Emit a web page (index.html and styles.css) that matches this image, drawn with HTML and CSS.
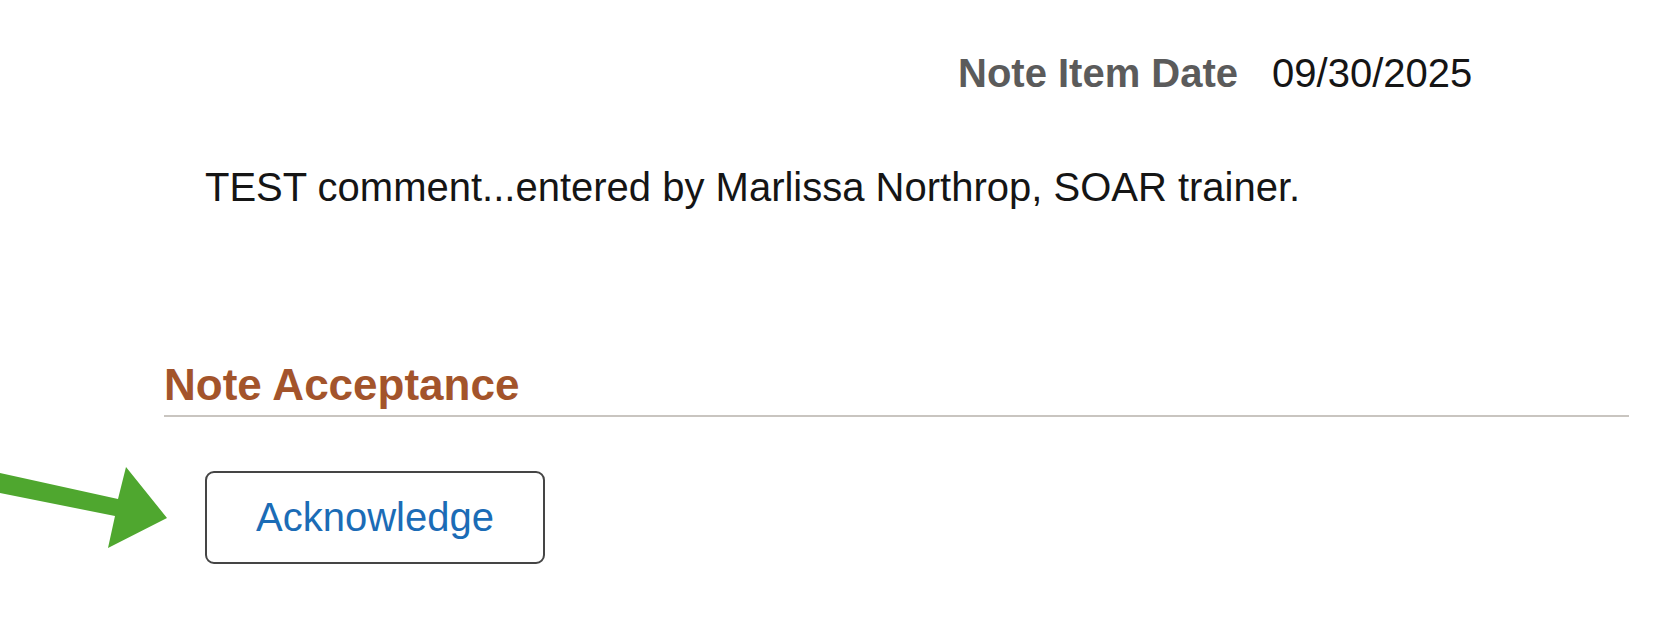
FILE: index.html
```html
<!DOCTYPE html>
<html lang="en">
<head>
  <meta charset="UTF-8">
  <meta name="viewport" content="width=device-width, initial-scale=1.0">
  <title>Note Acceptance</title>
  <link rel="stylesheet" href="styles.css">
</head>
<body>
  <div class="page">
    <div class="date-row">
      <span class="date-label">Note Item Date</span>
      <span class="date-value">09/30/2025</span>
    </div>

    <p class="comment">TEST comment...entered by Marlissa Northrop, SOAR trainer.</p>

    <!-- Acceptance section -->
    <h2 class="section-title">Note Acceptance</h2>
    <div class="actions">
      <button class="ack-button">Acknowledge</button>
    </div>
  </div>

  <!-- annotation arrow pointing at the button -->
  <svg class="pointer-arrow" width="180" height="100" viewBox="0 0 180 100">
    <polygon points="0,13 118,39 126,7 167,58 108,88 115,56 0,33" fill="#4fa72f" />
  </svg>
</body>
</html>
```

FILE: styles.css
```css
body {
  margin: 0;
  font-family: 'Liberation Sans', Arial, sans-serif;
  background: white;
  position: relative;
  height: 633px;
  overflow: hidden;
}

.page {
  padding: 50px 50px 0 164px;
}

.date-row {
  display: flex;
  gap: 34px;
  padding-left: 794px;
  font-size: 40px;
  line-height: 46px;
}

.date-label {
  font-weight: bold;
  color: #5b5b5b;
}

.date-value {
  color: #151515;
}

.comment {
  margin: 68px 0 0 41px;
  font-size: 40px;
  line-height: 46px;
  color: #151515;
}

.section-title {
  margin: 150px 0 0 0;
  padding-bottom: 5px;
  font-size: 44px;
  line-height: 50px;
  font-weight: bold;
  color: #a3542b;
  border-bottom: 2px solid #c9c5c0;
}

.actions {
  padding: 54px 0 0 41px;
}

.ack-button {
  width: 340px;
  padding: 21px 0 22px;
  font-family: 'Liberation Sans', Arial, sans-serif;
  font-size: 40px;
  line-height: 46px;
  color: #1b6cb6;
  background: white;
  border: 2px solid #454545;
  border-radius: 9px;
  cursor: pointer;
}

.pointer-arrow {
  position: absolute;
  left: 0;
  top: 460px;
}
```
